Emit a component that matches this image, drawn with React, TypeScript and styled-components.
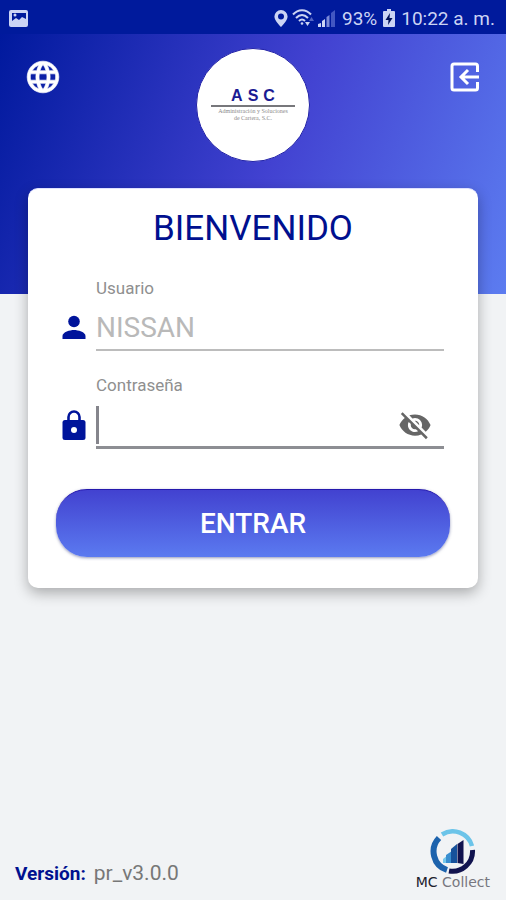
import React, { useState } from "react";
import styled, { createGlobalStyle } from "styled-components";

const GlobalStyle = createGlobalStyle`
  *, *::before, *::after { box-sizing: border-box; }
  body {
    margin: 0;
    font-family: Roboto, "Liberation Sans", sans-serif;
    background: #f1f3f5;
  }
`;

const Page = styled.div`
  min-height: 100vh;
  display: flex;
  flex-direction: column;
  background:
    linear-gradient(112deg, #00199d 2%, #4242d1 54%, #5c7cf0 100%) 0 0 / 100% 294px no-repeat,
    #f1f3f5;
`;

const StatusBar = styled.div`
  height: 34px;
  padding: 2px 11px 0 9px;
  display: flex;
  align-items: center;
  justify-content: space-between;
  background: #001a9c;
  color: #ccd4f4;
  font-size: 19px;
`;

const StatusGroup = styled.div`
  display: flex;
  align-items: center;
  gap: 6px;
  white-space: nowrap;
`;

const Signals = styled.div`
  display: flex;
  align-items: center;
  gap: 4px;
`;

const Header = styled.header`
  height: 154px;
  padding: 14px 24px 0;
  display: flex;
  justify-content: space-between;
  align-items: flex-start;
`;

const IconButton = styled.button`
  display: flex;
  padding: 0;
  border: 0;
  background: none;
  color: ${(p) => p.color};
  cursor: pointer;
`;

const HeaderAction = styled(IconButton)`
  margin-top: 10px;
`;

const Brand = styled.div`
  width: 114px;
  height: 114px;
  border-radius: 50%;
  background: #fff;
  border: 1px solid #2222a8;
  display: flex;
  flex-direction: column;
  align-items: center;
  padding-top: 38px;
`;

const BrandName = styled.span`
  display: flex;
  gap: 5px;
  font: bold 16px/18px "Liberation Sans", Arial, sans-serif;
  color: #1b1b93;
`;

const BrandRule = styled.div`
  width: 84px;
  height: 2px;
  background: #77777b;
`;

const BrandNote = styled.p`
  margin: 1px 0 0;
  font: 6px/7px "Liberation Serif", serif;
  color: #8b8b8b;
  text-align: center;
`;

const Card = styled.form`
  margin: 0 28px;
  padding: 20px 28px 31px;
  background: #fff;
  border-radius: 10px;
  border-top: 1px solid #dfe1ff;
  box-shadow: 0 5px 14px rgba(0, 0, 0, 0.3);
`;

const Title = styled.h1`
  margin: 0;
  font-size: 35px;
  line-height: 40px;
  font-weight: 400;
  text-align: center;
  color: #00108f;
`;

const Field = styled.div`
  display: grid;
  grid-template-columns: 40px minmax(0, 1fr);
  padding-right: 6px;
`;

const UserField = styled(Field)`
  margin-top: 29px;
`;

const PasswordField = styled(Field)`
  margin-top: 24px;
`;

const Label = styled.label`
  grid-column: 2;
  font-size: 17px;
  line-height: 20px;
  color: #8f8f8f;
`;

const FieldIcon = styled.div`
  display: flex;
  align-items: center;
  padding: 6px 0 0 2px;
  color: #00149b;
`;

const InputRow = styled.div<{ $active?: boolean }>`
  height: ${(p) => (p.$active ? 54 : 53)}px;
  padding: 8px 12px 0 0;
  display: flex;
  align-items: center;
  border-bottom: ${(p) => (p.$active ? "3px solid #8d8e93" : "2px solid #bcbcbc")};
`;

const Caret = styled.span`
  width: 3px;
  height: 38px;
  flex: none;
  background: #85858c;
`;

const Input = styled.input`
  flex: 1;
  min-width: 0;
  height: 40px;
  padding: 0;
  border: 0;
  outline: 0;
  background: transparent;
  font: 28px/40px Roboto, "Liberation Sans", sans-serif;
  color: #444;
  &::placeholder { color: #b9b9b9; opacity: 1; }
`;

const Submit = styled.button`
  display: block;
  width: 100%;
  height: 68px;
  margin-top: 40px;
  border: 0;
  border-top: 1px solid #2418ad;
  border-radius: 31px;
  background: linear-gradient(#4242d0, #5b7af0);
  box-shadow: 0 1px 3px rgba(40, 50, 120, 0.5);
  color: #fff;
  font: 500 28px/40px Roboto, "Liberation Sans", sans-serif;
  cursor: pointer;
`;

const Footer = styled.footer`
  margin-top: auto;
  padding: 0 16px 11px 15px;
  display: flex;
  align-items: flex-end;
  justify-content: space-between;
`;

const Version = styled.p`
  margin: 0 0 2px;
  display: flex;
  align-items: baseline;
  gap: 8px;
  font-size: 21px;
  line-height: 26px;
  color: #777;
`;

const VersionLabel = styled.strong`
  font-size: 19px;
  font-weight: 700;
  color: #00108f;
`;

const Product = styled.div`
  display: flex;
  flex-direction: column;
  align-items: center;
  font: 14px/14px "DejaVu Sans", sans-serif;
  color: #77777f;
`;

const ProductName = styled.span`
  white-space: nowrap;
`;

const ProductInitials = styled.span`
  color: #20202c;
`;

const PictureIcon = () => (
  <svg width="19" height="17" viewBox="0 0 19 17" aria-hidden="true">
    <path fill="currentColor" fillRule="evenodd" d="M2 0h15a2 2 0 0 1 2 2v13a2 2 0 0 1-2 2H2a2 2 0 0 1-2-2V2a2 2 0 0 1 2-2Zm1 3v8l4-3 3 2 3-3 4 2V3Z" />
    <circle cx="6" cy="5" r="1.5" fill="currentColor" />
  </svg>
);

const PinIcon = () => (
  <svg width="14" height="17" viewBox="0 0 14 17" aria-hidden="true">
    <path fill="currentColor" fillRule="evenodd" d="M7 0a6.6 6.6 0 0 0-6.600 6.600C.4 11 7 17 7 17s6.600-6 6.600-10.400A6.600 6.600 0 0 0 7 0Zm0 3.600a3 3 0 1 1 0 6 3 3 0 0 1 0-6Z" />
  </svg>
);

const WifiIcon = () => (
  <svg width="22" height="18" viewBox="0 0 22 18" fill="none" stroke="currentColor" strokeWidth="2" aria-hidden="true">
    <path d="M1 5.500C6-.3 14-.3 19 5.500M4 9c4-4 8-4 12 0M7 12c2-2 4-2 6 0" />
    <circle cx="10" cy="14.5" r="1.300" fill="currentColor" stroke="none" />
    <path fill="currentColor" stroke="none" d="M13 13h5l-2.500 4z" />
    <path fill="#5264c4" stroke="none" d="M17 12l2.500-4 2.500 4z" />
  </svg>
);

const CellIcon = () => (
  <svg width="18" height="18" viewBox="0 0 18 18" aria-hidden="true">
    <path fill="currentColor" d="M0 18v-3l3-1v4zM4 18v-6l3-2v8z" />
    <path fill="#7c8ad8" d="M8.500 18V8l3-2v12z" />
    <path fill="#4257c2" d="M13 18V4l4-3v17z" />
  </svg>
);

const BatteryIcon = () => (
  <svg width="12" height="18" viewBox="0 0 12 18" aria-hidden="true">
    <path fill="currentColor" d="M4 0h4v2h3a1 1 0 0 1 1 1v14a1 1 0 0 1-1 1H1a1 1 0 0 1-1-1V3a1 1 0 0 1 1-1h3z" />
    <path fill="#001058" d="M7 4 2.500 11H5.500L5 16l4.500-7H6.500z" />
  </svg>
);

const GlobeIcon = () => (
  <svg width="38" height="38" viewBox="0 0 24 24" fill="currentColor" stroke="currentColor" strokeWidth="0.400" aria-hidden="true">
    <path d="M11.990 2C6.470 2 2 6.480 2 12s4.470 10 9.990 10C17.520 22 22 17.520 22 12S17.520 2 11.990 2zm6.930 6h-2.950a15.650 15.650 0 0 0-1.380-3.560A8.030 8.030 0 0 1 18.920 8zM12 4.040c.83 1.200 1.480 2.530 1.910 3.960h-3.820c.43-1.430 1.080-2.760 1.910-3.960zM4.260 14C4.100 13.360 4 12.690 4 12s.1-1.360.26-2h3.380c-.08.66-.14 1.320-.14 2s.06 1.340.14 2H4.260zm.82 2h2.950c.32 1.250.78 2.450 1.380 3.560A7.990 7.990 0 0 1 5.080 16zm2.950-8H5.080a7.990 7.990 0 0 1 4.330-3.560A15.650 15.650 0 0 0 8.030 8zM12 19.960c-.83-1.200-1.480-2.530-1.910-3.960h3.820c-.43 1.430-1.080 2.760-1.910 3.960zM14.340 14H9.660c-.09-.66-.16-1.320-.16-2s.07-1.350.16-2h4.680c.09.65.16 1.320.16 2s-.07 1.340-.16 2zm.25 5.560c.6-1.110 1.060-2.310 1.380-3.560h2.950a8.030 8.030 0 0 1-4.330 3.560zM16.360 14c.08-.66.14-1.320.14-2s-.06-1.340-.14-2h3.380c.16.64.26 1.310.26 2s-.1 1.360-.26 2h-3.380z" />
  </svg>
);

const ExitIcon = () => (
  <svg width="38" height="38" viewBox="-4 0 38 38" fill="none" stroke="currentColor" strokeWidth="3" aria-hidden="true">
    <path d="M29.500 14V8a2 2 0 0 0-2-2H6a2 2 0 0 0-2 2v22a2 2 0 0 0 2 2h21.500a2 2 0 0 0 2-2v-6" />
    <path d="M31 19H12.500M20 12l-7 7 7 7" />
  </svg>
);

const PersonIcon = () => (
  <svg width="32" height="32" viewBox="0 0 32 32" fill="currentColor" aria-hidden="true">
    <circle cx="16" cy="9.500" r="5.800" />
    <path d="M4.500 27v-3c0-4 7.500-6 11.500-6s11.500 2 11.500 6v3z" />
  </svg>
);

const LockIcon = () => (
  <svg width="32" height="36" viewBox="0 0 32 36" aria-hidden="true">
    <path d="M10.500 14v-4a5.500 5.500 0 0 1 11 0v4" fill="none" stroke="currentColor" strokeWidth="2.600" />
    <rect x="4.500" y="13" width="23" height="20" rx="2.500" fill="currentColor" />
    <circle cx="16" cy="23" r="3" fill="#fff" />
  </svg>
);

const HiddenEyeIcon = () => (
  <svg width="34" height="34" viewBox="0 0 24 24" fill="currentColor" aria-hidden="true">
    <path d="M12 7c2.760 0 5 2.240 5 5 0 .65-.13 1.260-.36 1.830l2.920 2.920c1.510-1.260 2.700-2.890 3.430-4.750-1.730-4.390-6-7.500-11-7.500-1.400 0-2.740.25-3.980.7l2.160 2.160C10.740 7.130 11.350 7 12 7zM2 4.270l2.280 2.280.46.46C3.080 8.300 1.780 10.020 1 12c1.730 4.390 6 7.500 11 7.500 1.550 0 3.030-.3 4.380-.84l.42.42L19.730 22 21 20.730 3.270 3 2 4.270zM7.530 9.800l1.550 1.550c-.05.21-.08.43-.08.65 0 1.660 1.340 3 3 3 .22 0 .44-.03.65-.08l1.550 1.550c-.67.33-1.410.53-2.200.53-2.760 0-5-2.240-5-5 0-.79.2-1.530.53-2.200zm4.310-.78 3.150 3.150.02-.16c0-1.660-1.340-3-3-3l-.17.01z" />
  </svg>
);

const ProductIcon = () => (
  <svg width="46" height="46" viewBox="0 0 46 46" aria-hidden="true">
    <g fill="none" strokeWidth="4.500">
      <path stroke="#6cc4e9" d="M12 5.500A20 20 0 0 1 42 17" />
      <path stroke="#1d63ad" strokeWidth="6" d="M9 9A19.500 19.500 0 0 0 17 41" />
      <path stroke="#11134f" strokeWidth="5" d="M42.500 21A20 20 0 0 1 19 42" />
    </g>
    <path fill="#75c8ed" d="M13 34v-4l5-4v8z" />
    <path fill="#3a8fd0" d="M16 34v-8l6-4v12z" />
    <path fill="#17529c" d="M21 34V20l6-5v19z" />
    <path fill="#11134f" d="M27.500 34V15l6-4v24z" />
  </svg>
);

export default function App() {
  const [user, setUser] = useState("");
  const [password, setPassword] = useState("");
  const [visible, setVisible] = useState(false);

  return (
    <Page>
      <GlobalStyle />
      <StatusBar>
        <PictureIcon />
        <StatusGroup>
          <Signals>
            <PinIcon />
            <WifiIcon />
            <CellIcon />
          </Signals>
          <span>93%</span>
          <BatteryIcon />
          <span>10:22 a. m.</span>
        </StatusGroup>
      </StatusBar>
      <Header>
        <HeaderAction type="button" color="#fff" aria-label="Idioma">
          <GlobeIcon />
        </HeaderAction>
        <Brand>
          <BrandName>
            <span>A</span>
            <span>S</span>
            <span>C</span>
          </BrandName>
          <BrandRule />
          <BrandNote>
            Administración y Soluciones
            <br />
            de Cartera, S.C.
          </BrandNote>
        </Brand>
        <HeaderAction type="button" color="#fff" aria-label="Salir">
          <ExitIcon />
        </HeaderAction>
      </Header>
      <Card onSubmit={(e) => e.preventDefault()}>
        <Title>BIENVENIDO</Title>
        <UserField>
          <Label htmlFor="user">Usuario</Label>
          <FieldIcon>
            <PersonIcon />
          </FieldIcon>
          <InputRow>
            <Input id="user" placeholder="NISSAN" value={user} onChange={(e) => setUser(e.target.value)} />
          </InputRow>
        </UserField>
        <PasswordField>
          <Label htmlFor="password">Contraseña</Label>
          <FieldIcon>
            <LockIcon />
          </FieldIcon>
          <InputRow $active>
            {password === "" && <Caret />}
            <Input
              id="password"
              type={visible ? "text" : "password"}
              value={password}
              onChange={(e) => setPassword(e.target.value)}
            />
            <IconButton type="button" color="#666" aria-label="Mostrar contraseña" onClick={() => setVisible(!visible)}>
              <HiddenEyeIcon />
            </IconButton>
          </InputRow>
        </PasswordField>
        <Submit type="submit">ENTRAR</Submit>
      </Card>
      <Footer>
        <Version>
          <VersionLabel>Versión:</VersionLabel>
          <span>pr_v3.0.0</span>
        </Version>
        <Product>
          <ProductIcon />
          <ProductName>
            <ProductInitials>MC</ProductInitials> Collect
          </ProductName>
        </Product>
      </Footer>
    </Page>
  );
}
